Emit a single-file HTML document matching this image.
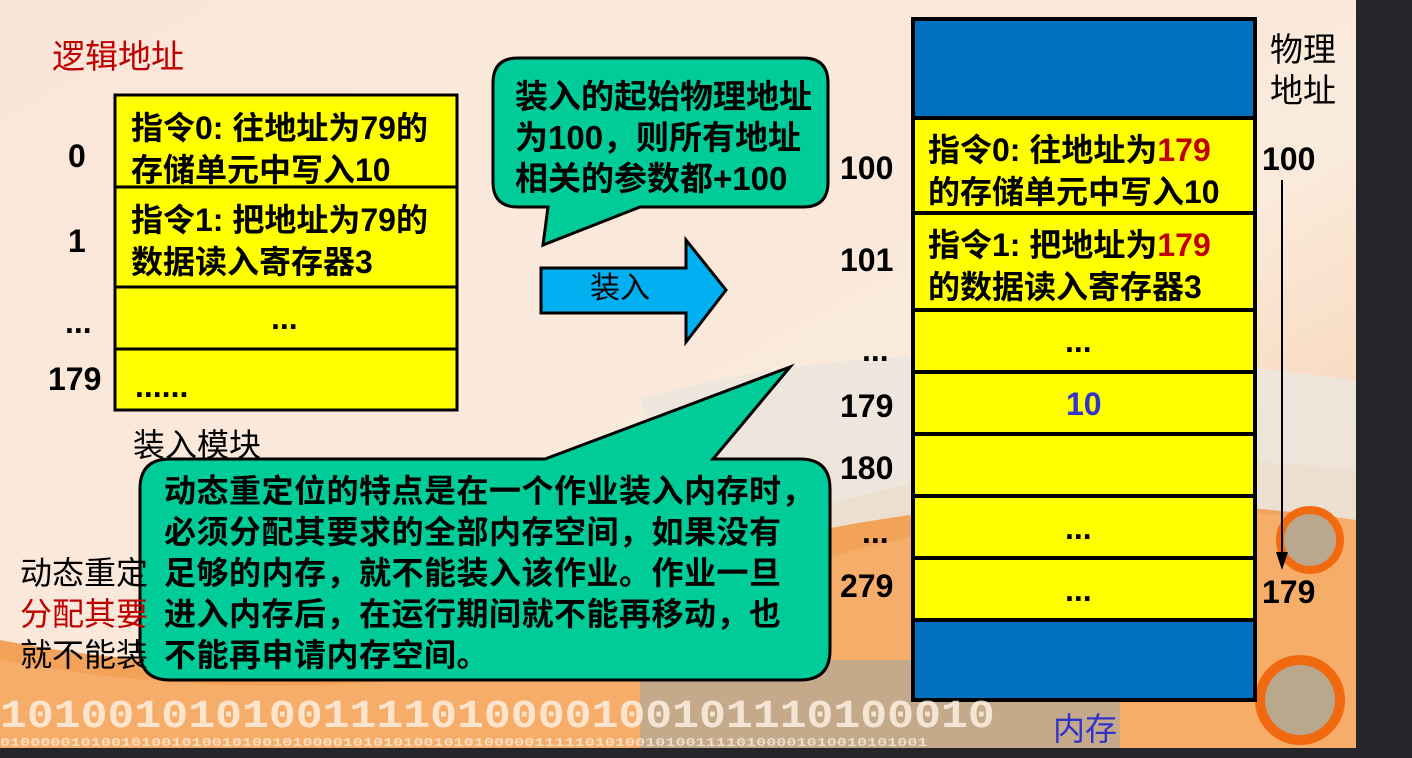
<!DOCTYPE html><html><head><meta charset="utf-8"><style>
body{margin:0;width:1412px;height:758px;background:#252629;overflow:hidden;position:relative;font-family:"Liberation Sans","Noto Sans CJK SC",sans-serif;}
.t{position:absolute;white-space:nowrap;font-weight:bold;color:#000;line-height:1}
.c{font-size:32px}
</style></head><body>
<svg width="1412" height="758" style="position:absolute;left:0;top:0">
<defs><linearGradient id="bg" x1="0" y1="0" x2="1" y2="1"><stop offset="0" stop-color="#fae6d8"/><stop offset="0.6" stop-color="#faeadb"/><stop offset="1" stop-color="#f6c49a"/></linearGradient></defs>
<rect x="0" y="0" width="1356" height="748" fill="url(#bg)"/>
<path d="M0 640 Q300 700 620 600 Q900 420 1356 470 L1356 748 L0 748Z" fill="#f3a25a"/>
<path d="M0 660 Q320 720 640 640 Q900 480 1356 520 L1356 748 L0 748Z" fill="#f7ad6a"/>
<path d="M640 400 Q900 320 1356 380 L1356 520 Q1000 470 700 560 Z" fill="#ece6dd" opacity="0.9"/>
<circle cx="1300" cy="700" r="40" fill="#b9a78e" stroke="#f26a10" stroke-width="10"/>
<circle cx="1310" cy="540" r="30" fill="#b9a78e" stroke="#f26a10" stroke-width="8"/>
<rect x="640" y="660" width="480" height="88" fill="#b7a894" opacity="0.8"/>
<g stroke="#000" stroke-width="3" fill="#ffff00">
<rect x="115" y="95" width="342" height="92"/><rect x="115" y="187" width="342" height="100"/><rect x="115" y="287" width="342" height="62"/><rect x="115" y="349" width="342" height="61"/>
</g>
<g stroke="#000" stroke-width="4">
<rect x="913" y="19" width="342" height="99" fill="#0070c0"/>
<rect x="913" y="118" width="342" height="95" fill="#ffff00"/>
<rect x="913" y="213" width="342" height="97" fill="#ffff00"/>
<rect x="913" y="310" width="342" height="62" fill="#ffff00"/>
<rect x="913" y="372" width="342" height="62" fill="#ffff00"/>
<rect x="913" y="434" width="342" height="62" fill="#ffff00"/>
<rect x="913" y="496" width="342" height="62" fill="#ffff00"/>
<rect x="913" y="558" width="342" height="62" fill="#ffff00"/>
<rect x="913" y="620" width="342" height="80" fill="#0070c0"/>
</g>
<path d="M541 268 L686 268 L686 240 L726 290 L686 342 L686 313 L541 313Z" fill="#00b0f0" stroke="#000" stroke-width="3"/>
<path d="M518 58 L803 58 Q828 58 828 83 L828 182 Q828 207 803 207 L640 207 L543 245 L548 207 L518 207 Q493 207 493 182 L493 83 Q493 58 518 58Z" fill="#00cc99" stroke="#000" stroke-width="3"/>
<path d="M170 459 L545 459 L790 367 L713 459 L800 459 Q830 459 830 489 L830 650 Q830 680 800 680 L170 680 Q140 680 140 650 L140 489 Q140 459 170 459Z" fill="#00cc99" stroke="#000" stroke-width="3"/>
<line x1="1282" y1="180" x2="1282" y2="560" stroke="#000" stroke-width="2"/>
<path d="M1276 552 L1282 570 L1288 552Z" fill="#000"/>
</svg>
<div class="t" style="left:52px;top:40px;font-size:33px;color:#c00000;font-weight:normal">逻辑地址</div>
<div class="t c" style="left:131px;top:107px;line-height:42px">指令0: 往地址为79的<br>存储单元中写入10</div>
<div class="t c" style="left:131px;top:199px;line-height:42px">指令1: 把地址为79的<br>数据读入寄存器3</div>
<div class="t c" style="left:271px;top:302px">...</div>
<div class="t c" style="left:135px;top:370px">......</div>
<div class="t c" style="left:68px;top:140px">0</div>
<div class="t c" style="left:68px;top:225px">1</div>
<div class="t c" style="left:65px;top:306px">...</div>
<div class="t c" style="left:48px;top:363px">179</div>
<div class="t" style="left:133px;top:429px;font-size:32px;font-weight:normal">装入模块</div>
<div class="t" style="left:20px;top:553px;font-size:32px;font-weight:normal;line-height:41px">动态重定<br><span style="color:#c00000">分配其要</span><br>就不能装</div>
<div class="t" style="left:515px;top:76px;font-size:33px;line-height:41px">装入的起始物理地址<br>为100，则所有地址<br>相关的参数都+100</div>
<div class="t" style="left:590px;top:274px;font-size:30px;font-weight:normal">装入</div>
<div class="t" style="left:164px;top:471px;font-size:32px;line-height:41px;letter-spacing:0.5px">动态重定位的特点是在一个作业装入内存时，<br>必须分配其要求的全部内存空间，如果没有<br>足够的内存，就不能装入该作业。作业一旦<br>进入内存后，在运行期间就不能再移动，也<br>不能再申请内存空间。</div>
<div class="t c" style="left:928px;top:129px;line-height:42px">指令0: 往地址为<span style="color:#c00000">179</span><br>的存储单元中写入10</div>
<div class="t c" style="left:928px;top:224px;line-height:42px">指令1: 把地址为<span style="color:#c00000">179</span><br>的数据读入寄存器3</div>
<div class="t c" style="left:1065px;top:325px">...</div>
<div class="t c" style="left:1066px;top:388px;color:#3333cc">10</div>
<div class="t c" style="left:1065px;top:512px">...</div>
<div class="t c" style="left:1065px;top:574px">...</div>
<div class="t c" style="left:840px;top:152px">100</div>
<div class="t c" style="left:840px;top:244px">101</div>
<div class="t c" style="left:862px;top:334px">...</div>
<div class="t c" style="left:840px;top:390px">179</div>
<div class="t c" style="left:840px;top:452px">180</div>
<div class="t c" style="left:862px;top:516px">...</div>
<div class="t c" style="left:840px;top:570px">279</div>
<div class="t" style="left:1270px;top:29px;font-size:33px;font-weight:normal;line-height:41px">物理<br>地址</div>
<div class="t c" style="left:1262px;top:143px">100</div>
<div class="t c" style="left:1262px;top:576px">179</div>
<div class="t" style="left:1053px;top:713px;font-size:32px;color:#3333cc;font-weight:normal">内存</div>
<div class="t" style="left:0;top:698px;font-size:40px;color:#fff3e6;opacity:.8;font-family:'Liberation Mono',monospace;transform:scaleX(1.12);transform-origin:0 0">1010010101001111010000100101110100010</div>
<div class="t" style="left:0;top:737px;font-size:12px;color:#fff3e6;opacity:.7;font-family:'Liberation Mono',monospace;transform:scaleX(1.4);transform-origin:0 0">01000001010010100101001010010100001010101001010100000111110101001010011110100001010010101001</div>
</body></html>
